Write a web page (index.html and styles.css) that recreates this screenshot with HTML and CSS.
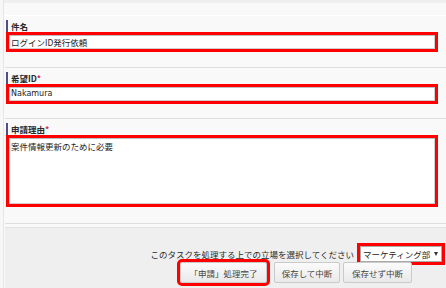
FILE: index.html
```
<!DOCTYPE html>
<html lang="ja">
<head>
    <meta charset="UTF-8">
    <title>申請フォーム</title>
    <link rel="stylesheet" href="styles.css">
</head>
<body>
    <div class="page">
        <div class="head"></div>

        <div class="field first">
            <div class="label">件名</div>
            <div class="input hl">ログインID発行依頼</div>
        </div>

        <div class="field">
            <div class="label">希望ID<span class="req">*</span></div>
            <div class="input hl latin">Nakamura</div>
        </div>

        <div class="field last">
            <div class="label">申請理由<span class="req">*</span></div>
            <div class="input area hl">案件情報更新のために必要</div>
        </div>

        <div class="actions">
            <div class="role">
                <span>このタスクを処理する上での立場を選択してください</span>
                <div class="select hl">マーケティング部<span class="arrow"></span></div>
            </div>
            <div class="buttons">
                <button class="btn main hl">「申請」処理完了</button>
                <button class="btn save">保存して中断</button>
                <button class="btn quit">保存せず中断</button>
            </div>
        </div>
    </div>
</body>
</html>
```

FILE: styles.css
```
* { box-sizing: border-box; }

body {
    margin: 0;
    background: #f7f7f7;
    font-family: "Noto Sans CJK JP", "DejaVu Sans", sans-serif;
    font-size: 8.5px;
    color: #2a2a2a;
    height: 288px;
    overflow: hidden;
}

.page {
    margin-left: 3px;
    border-left: 1px solid #e6e6e6;
    padding-left: 1px;
    height: 100%;
    background: linear-gradient(#efefef 0, #efefef 3px, #f9f9f9 3px);
}

.head {
    height: 16px;
    border-bottom: 1px solid #fff;
}

.field {
    padding: 4px 0 17px 1px;
    border-bottom: 1px solid #dedede;
}

.field.first { padding-bottom: 18px; }
.field.last { padding-bottom: 19px; }

.label {
    height: 12px;
    line-height: 12px;
    margin-bottom: 3px;
    padding-left: 3px;
    border-left: 2px solid #4f4f86;
    font-weight: bold;
}

.req {
    color: #d0245a;
}

.input {
    margin-left: 3px;
    width: 426px;
    height: 14px;
    line-height: 12px;
    padding-left: 1px;
    color: #222;
    background: #fff;
    border: 1px solid #cfcfcf;
    border-top-color: #bdbdbd;
    white-space: nowrap;
}

.input.latin {
    font-family: "DejaVu Sans", sans-serif;
    font-size: 8px;
}

.input.area {
    height: 66px;
    padding-top: 1px;
}

.hl {
    outline: 3px solid #ff0000;
}

.actions {
    margin-top: 3px;
    border-top: 1px solid #e2e2e2;
    background: #efefef;
    height: 62px;
    padding-top: 18px;
}

.role {
    display: flex;
    justify-content: flex-end;
    align-items: center;
    gap: 6px;
    padding-right: 4px;
    height: 16px;
}

.select {
    width: 82px;
    height: 16px;
    padding: 0 3px 0 2px;
    color: #222;
    background: #fff;
    border: 1px solid #a9a9a9;
    display: flex;
    justify-content: space-between;
    align-items: center;
}

.arrow {
    width: 0;
    height: 0;
    border-left: 2.5px solid transparent;
    border-right: 2.5px solid transparent;
    border-top: 4px solid #333;
}

.buttons {
    display: flex;
    justify-content: flex-end;
    padding-right: 34px;
}

.btn {
    height: 21px;
    padding: 0;
    font-family: inherit;
    font-size: 8.5px;
    color: #444;
    background: linear-gradient(#fbfbfb, #e9e9e9);
    border: 1px solid #cacaca;
    border-radius: 2px;
}

.btn.main { width: 87px; margin-right: 7px; }
.btn.save { width: 66px; margin-right: 3px; }
.btn.quit { width: 69px; }
```
